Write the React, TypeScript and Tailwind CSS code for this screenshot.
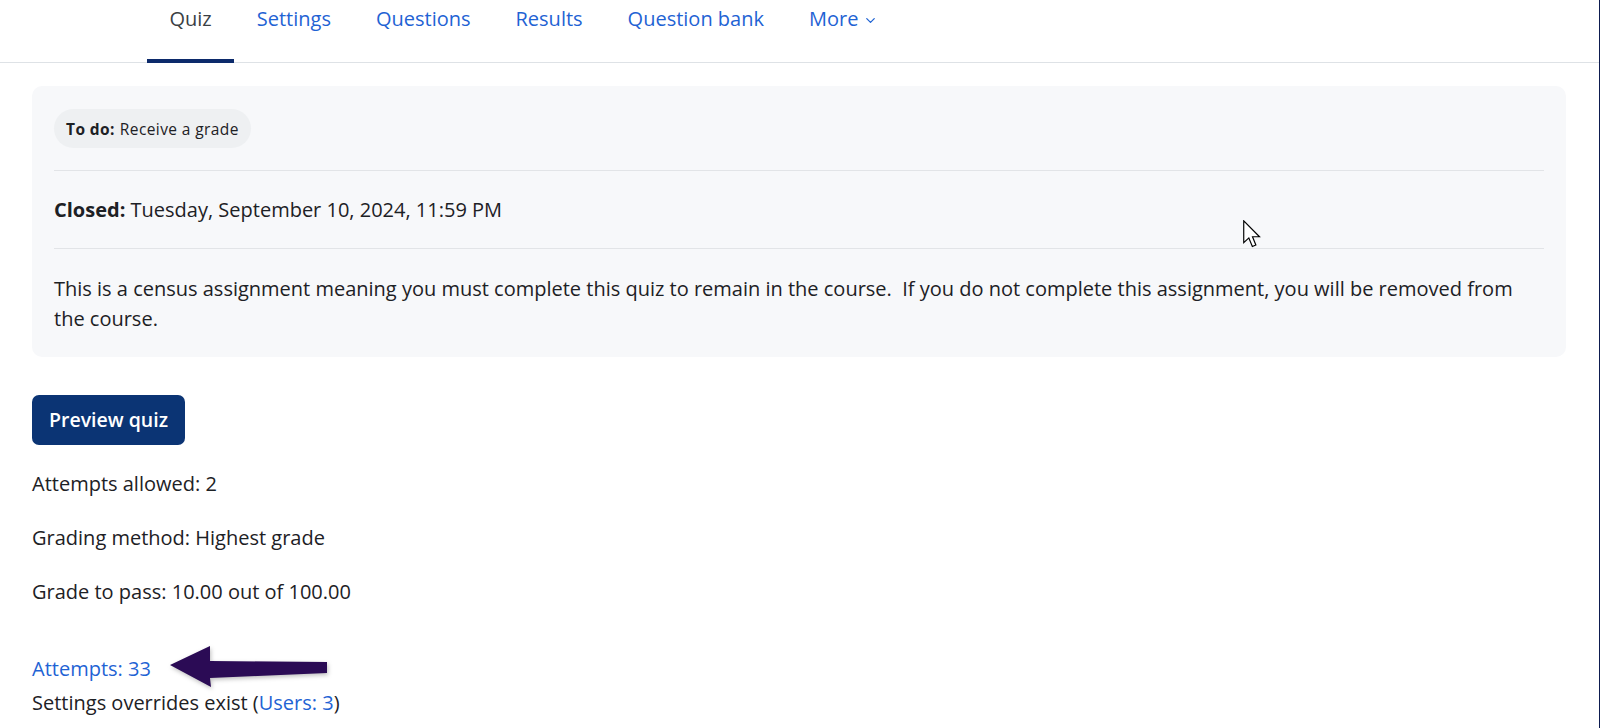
import type { FC } from "react";
import { ChevronDown } from "lucide-react";

const tabs = [
  { label: "Quiz", active: true },
  { label: "Settings" },
  { label: "Questions" },
  { label: "Results" },
  { label: "Question bank" },
];

const infoRows = [
  "Attempts allowed: 2",
  "Grading method: Highest grade",
  "Grade to pass: 10.00 out of 100.00",
];

const Cursor: FC = () => (
  <svg
    className="absolute left-[1243px] top-[220px]"
    width="19"
    height="28"
    viewBox="0 0 13 19"
  >
    <path
      d="M0.5 0.5 L0.5 15.5 L4 12.2 L6.4 18 L8.8 17 L6.5 11.4 L11.3 11.4 Z"
      fill="#fff"
      stroke="#000"
      strokeWidth="0.8"
    />
  </svg>
);

const Arrow: FC = () => (
  <svg
    className="absolute left-[160px] top-[636px] drop-shadow-[1px_2px_2px_rgba(0,0,0,0.25)]"
    width="176"
    height="60"
    viewBox="160 636 176 60"
  >
    <polygon
      points="170,665 210,646 210,661 327,662 327,673 210,678 211,687"
      fill="#2b0b55"
    />
  </svg>
);

export default function App() {
  return (
    <div className="relative h-screen w-full overflow-hidden bg-white border-r border-[#0d1b4f] font-['Open_Sans',sans-serif] text-[#1d2125] text-[20px] leading-[30px]">
      {/* Secondary navigation */}
      <nav className="flex h-[63px] border-b border-[#dee2e6] pl-[147px]">
        {tabs.map((t) => (
          <div
            key={t.label}
            className={`relative px-[22.5px] pt-[4px] ${
              t.active ? "text-[#3b3f44]" : "text-[#1f63d4]"
            }`}
          >
            {t.label}
            {t.active && (
              <span className="absolute left-0 right-0 bottom-[-1px] h-[4px] bg-[#0c2a6b]" />
            )}
          </div>
        ))}
        <div className="flex items-start gap-[5px] px-[22.5px] pt-[4px] text-[#1f63d4]">
          More
          <ChevronDown className="mt-[9px] h-[15px] w-[15px]" strokeWidth={2} />
        </div>
      </nav>

      <main className="pl-[32px] pr-[33px] pt-[23px]">
        {/* Activity info card */}
        <div className="rounded-[10px] bg-[#f7f8fa] px-[22px] pt-[23px] pb-[23px]">
          <div className="inline-flex h-[39px] items-center rounded-full bg-[#eef0f2] px-[12px] text-[15.5px] tracking-[0.4px]">
            <span className="font-bold">To do:</span>
            <span className="ml-[5px]">Receive a grade</span>
          </div>
          <div className="mt-[22px] border-t border-[#e2e4e7]" />
          <div className="pt-[24px] pb-[23px]">
            <span className="font-bold">Closed:</span> Tuesday, September 10,
            2024, 11:59 PM
          </div>
          <div className="border-t border-[#e2e4e7]" />
          <p className="pt-[25px]">
            This is a census assignment meaning you must complete this quiz to
            remain in the course.&nbsp; If you do not complete this assignment,
            you will be removed from the course.
          </p>
        </div>

        <button className="mt-[38px] h-[50px] rounded-[7px] bg-[#0b3474] px-[17px] text-[19.5px] font-semibold text-white">
          Preview quiz
        </button>

        <div className="mt-[24px] flex flex-col gap-[24px]">
          {infoRows.map((r) => (
            <p key={r}>{r}</p>
          ))}
        </div>

        <div className="mt-[47px]">
          <a className="text-[#1f63d4]">Attempts: 33</a>
        </div>
        <div className="mt-[4px]">
          Settings overrides exist (<a className="text-[#1f63d4]">Users: 3</a>)
        </div>
      </main>

      <Arrow />
      <Cursor />
    </div>
  );
}
